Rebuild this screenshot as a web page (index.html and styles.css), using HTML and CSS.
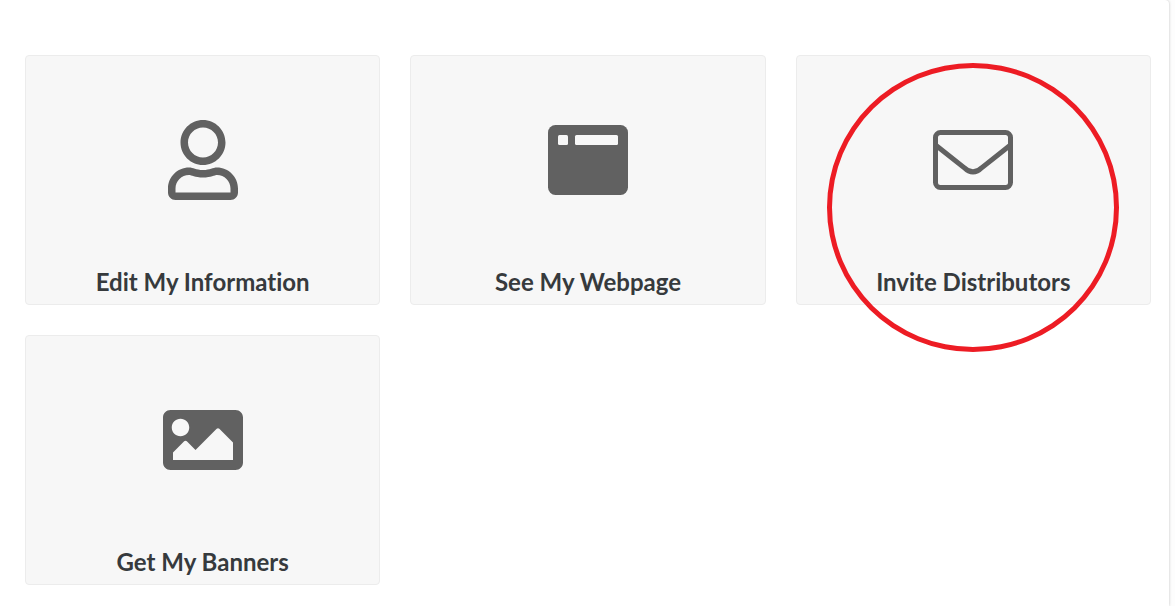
FILE: index.html
```html
<!DOCTYPE html>
<html lang="en">
<head>
    <meta charset="UTF-8">
    <meta name="viewport" content="width=device-width, initial-scale=1.0">
    <title>Distributor Dashboard</title>
    <link rel="stylesheet" href="styles.css">
</head>
<body>
    <main class="panel">
        <a class="card" href="#edit">
            <span class="icon">
                <svg width="70" height="80" viewBox="0 0 448 512" aria-hidden="true">
                    <path d="M313.6 304c-28.7 0-42.5 16-89.6 16-47.1 0-60.8-16-89.6-16C60.2 304 0 364.2 0 438.4V464c0 26.5 21.5 48 48 48h352c26.5 0 48-21.5 48-48v-25.6c0-74.2-60.2-134.4-134.4-134.4zM400 464H48v-25.6c0-47.6 38.8-86.4 86.4-86.4 14.6 0 38.3 16 89.6 16 51.7 0 74.9-16 89.6-16 47.6 0 86.4 38.8 86.4 86.4V464zM224 288c79.5 0 144-64.5 144-144S303.5 0 224 0 80 64.5 80 144s64.5 144 144 144zm0-240c52.9 0 96 43.1 96 96s-43.1 96-96 96-96-43.1-96-96 43.1-96 96-96z"/>
                </svg>
            </span>
            <span class="title">Edit My Information</span>
        </a>
        <a class="card" href="#webpage">
            <span class="icon">
                <svg width="80" height="70" viewBox="0 0 80 70" aria-hidden="true">
                    <rect width="80" height="70" rx="7.5"/>
                    <rect class="hole" x="10" y="10" width="10" height="10" rx="1.5"/>
                    <rect class="hole" x="27" y="10" width="43" height="10" rx="1.5"/>
                </svg>
            </span>
            <span class="title">See My Webpage</span>
        </a>
        <a class="card" href="#invite">
            <span class="icon">
                <svg class="outline" width="80" height="60" viewBox="0 0 80 60" aria-hidden="true">
                    <rect x="2.5" y="2.5" width="75" height="55" rx="5"/>
                    <path d="M2.5 15 31 37.5c6 6 12 6 18 0L77.5 15"/>
                </svg>
            </span>
            <span class="title">Invite Distributors</span>
            <span class="highlight"></span>
        </a>
        <a class="card" href="#banners">
            <span class="icon">
                <svg width="80" height="60" viewBox="0 64 512 384" aria-hidden="true">
                    <path d="M464 448H48c-26.51 0-48-21.49-48-48V112c0-26.51 21.49-48 48-48h416c26.51 0 48 21.49 48 48v288c0 26.51-21.49 48-48 48zM112 120c-30.928 0-56 25.072-56 56s25.072 56 56 56 56-25.072 56-56-25.072-56-56-56zM64 384h384V272l-87.515-87.515c-4.686-4.686-12.284-4.686-16.971 0L208 320l-55.515-55.515c-4.686-4.686-12.284-4.686-16.971 0L64 336v48z"/>
                </svg>
            </span>
            <span class="title">Get My Banners</span>
        </a>
    </main>
</body>
</html>
```
FILE: styles.css
```css
* {
    box-sizing: border-box;
}
body {
    margin: 0;
    background-color: #fdfdfd;
    font-family: Lato, "Open Sans", sans-serif;
}
.panel {
    display: grid;
    grid-template-columns: repeat(3, 1fr);
    gap: 30px;
    margin-right: 6px;
    padding: 55px 18px 21px 25px;
    background-color: #fff;
    border-radius: 0 4px 0 0;
    box-shadow: 0 0 3px rgba(0, 0, 0, 0.25);
}
.card {
    position: relative;
    display: flex;
    flex-direction: column;
    align-items: center;
    justify-content: space-between;
    min-height: 250px;
    padding: 64px 10px 6px;
    background-color: #f7f7f7;
    border: 1px solid #ececec;
    border-radius: 4px;
    color: #363a3d;
    text-decoration: none;
}
.icon {
    display: flex;
    align-items: center;
    height: 80px;
}
.icon svg {
    display: block;
    fill: #616161;
}
.icon .hole {
    fill: #f7f7f7;
}
.icon .outline {
    fill: none;
    stroke: #616161;
    stroke-width: 5;
}
.title {
    font-size: 24px;
    font-weight: 700;
    font-variant-ligatures: none;
    line-height: 32px;
}
/* red ring around the card to click */
.highlight {
    position: absolute;
    top: 7px;
    left: 50%;
    z-index: 1;
    width: 292px;
    height: 289px;
    border: 5px solid #ed1c24;
    border-radius: 50%;
    transform: translateX(-50%);
    pointer-events: none;
}
```
